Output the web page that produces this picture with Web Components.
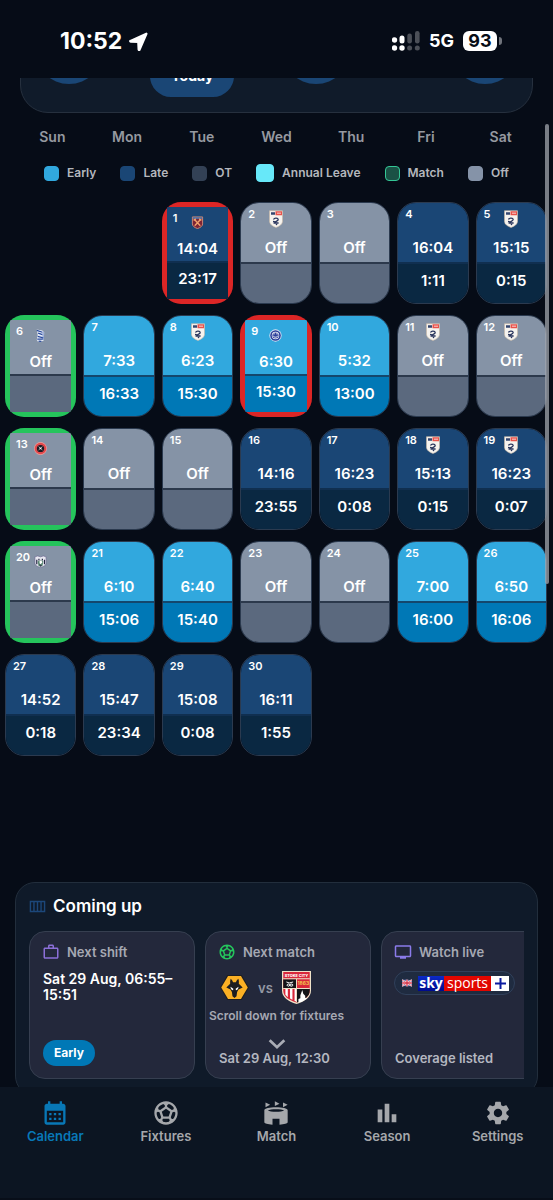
<!DOCTYPE html>
<html lang="en">
<head>
<meta charset="utf-8">
<meta name="viewport" content="width=device-width, initial-scale=1">
<title>Shift calendar</title>
<style>
  html, body { margin: 0; background: #060c17; }
  body { font-family: Inter, "Noto Sans", sans-serif; color: #fff; }
</style>
</head>
<body>
<shift-app></shift-app>

<script>
const define = (name, html, setup) => {
  const template = document.createElement('template');
  template.innerHTML = html;
  customElements.define(name, class extends HTMLElement {
    connectedCallback() {
      if (this.shadowRoot) return;
      const root = this.attachShadow({ mode: 'open' });
      const content = template.content.cloneNode(true);
      if (setup) setup(this, content);
      root.append(content);
    }
  });
};

/* ---------- icons ---------- */
const ball = '<path d="M12 2C6.48 2 2 6.48 2 12s4.48 10 10 10 10-4.48 10-10S17.52 2 12 2zm1 3.3l1.35-.95c1.82.56 3.37 1.76 4.38 3.34l-.39 1.34-1.35.46L13 6.7V5.3zm-3.35-.95L11 5.3v1.4L7.01 9.49l-1.35-.46-.39-1.34c1.01-1.57 2.56-2.77 4.38-3.34zM7.08 17.11l-1.14.1C4.73 15.81 4 13.99 4 12c0-.12.01-.23.02-.35l1-.73 1.38.48 1.46 4.34-.78 1.37zm7.42 2.48c-.79.26-1.63.41-2.5.41s-1.71-.15-2.5-.41l-.69-1.49.64-1.1h5.11l.64 1.11-.7 1.48zM14.27 15H9.73l-1.35-4.02L12 8.44l3.63 2.54L14.27 15zm3.79 2.21l-1.14-.1-.79-1.37 1.46-4.34 1.39-.47 1 .73c.01.11.02.22.02.34 0 1.99-.73 3.81-1.94 5.21z"/>';
const icons = {
  calendar: ['0 0 24 24', '<path d="M19 4h-1V2h-2v2H8V2H6v2H5c-1.11 0-1.99.9-1.99 2L3 20c0 1.1.89 2 2 2h14c1.1 0 2-.9 2-2V6c0-1.1-.9-2-2-2zm0 16H5V10h14v10zM9 14H7v-2h2v2zm4 0h-2v-2h2v2zm4 0h-2v-2h2v2zm-8 4H7v-2h2v2zm4 0h-2v-2h2v2zm4 0h-2v-2h2v2z"/>'],
  ball: ['0 0 24 24', ball],
  stadium: ['0 0 24 24', '<path d="M3 3l4 2-4 2zM11 2l4 2-4 2zM18 3l4 2-4 2z"/><path fill-rule="evenodd" d="M2 9.6C2 8 6.500 7 12 7s10 1 10 2.600V20c0 1-3 1.800-7 2v-5H9v5c-4-.2-7-1-7-2zM5 9.900c1.200.7 3.800 1.100 7 1.100s5.800-.4 7-1.100c-1.200-.7-3.800-1.100-7-1.100s-5.800.4-7 1.100z"/>'],
  chart: ['0 0 24 24', '<path d="M4 9h4v11H4zM16 13h4v7h-4zM10 4h4v16h-4z"/>'],
  settings: ['0 0 24 24', '<path d="M19.140 12.940c.04-.3.060-.61.060-.94s-.02-.64-.07-.94l2.030-1.580c.18-.14.230-.41.120-.61l-1.920-3.320c-.12-.22-.37-.29-.59-.22l-2.390.960c-.5-.38-1.030-.7-1.620-.94l-.36-2.540c-.04-.24-.24-.41-.48-.41h-3.840c-.24 0-.43.170-.47.410l-.36 2.540c-.59.240-1.130.570-1.620.940l-2.390-.96c-.22-.08-.47 0-.59.220L2.740 8.870c-.12.210-.08.470.12.610l2.030 1.580c-.05.300-.09.630-.09.940s.02.640.07.940l-2.030 1.580c-.18.140-.23.410-.12.610l1.920 3.320c.12.220.37.290.59.220l2.390-.96c.5.380 1.030.700 1.620.940l.36 2.540c.05.240.24.410.48.410h3.840c.24 0 .44-.17.470-.41l.36-2.540c.59-.24 1.130-.56 1.620-.94l2.390.960c.22.080.47 0 .59-.22l1.920-3.320c.12-.22.070-.47-.12-.61l-2.010-1.580zM12 15.600c-1.980 0-3.600-1.620-3.600-3.600s1.620-3.600 3.600-3.600 3.600 1.620 3.600 3.600-1.620 3.600-3.600 3.600z"/>'],
  bag: ['0 0 24 24', '<path d="M14 6V4h-4v2h4zM4 8v11h16V8H4zm16-2c1.110 0 2 .89 2 2v11c0 1.110-.89 2-2 2H4c-1.110 0-2-.89-2-2V8c0-1.110.89-2 2-2h4V4c0-1.110.89-2 2-2h4c1.110 0 2 .89 2 2v2h4z"/>'],
  tv: ['0 0 24 24', '<path d="M21 3H3c-1.100 0-2 .9-2 2v12c0 1.100.9 2 2 2h5v2h8v-2h5c1.100 0 2-.9 2-2V5c0-1.100-.9-2-2-2zm0 14H3V5h18v12z"/>'],
  week: ['0 0 24 24', '<path fill="none" stroke="currentColor" stroke-width="2" d="M2 5h20v14H2zM7 5v14M12 5v14M17 5v14"/>'],
  chevron: ['0 0 24 24', '<path fill="none" stroke="currentColor" stroke-width="3" d="M4 8l8 7.500L20 8"/>'],
  arrow: ['0 0 20 20', '<path stroke="currentColor" stroke-width="2.400" stroke-linejoin="round" d="M18.300 1.800L1.600 9.400c-.5.2-.4.700.2.800l8 .3.400 8c0 .6.600.7.800.2z"/>'],
  signal: ['0 0 28 20', '<g><circle cx="2.500" cy="9" r="2.700"/><circle cx="2.500" cy="17" r="2.700"/><rect x="7.500" y="4.500" width="5" height="8" rx="2.500"/><circle cx="10" cy="17" r="2.700"/></g><g opacity=".28"><rect x="15.300" y="2.500" width="4.600" height="10" rx="2.300"/><circle cx="17.600" cy="17" r="2.500"/><rect x="23" y="0" width="4.600" height="12.500" rx="2.300"/><circle cx="25.300" cy="17" r="2.500"/></g>'],
  efl: ['0 0 14 18', '<path fill="#f6f3ee" stroke="#cbb9a4" stroke-width=".6" d="M.5.7h13v10.500c0 3-3 5-6.500 6.300C3.500 16.200.5 14.200.5 11.200z"/><path fill="#34466f" d="M2 2.200h4v2.500H2z"/><path fill="#e8524a" d="M6.500 1.200H13v4H6.500z"/><path fill="#fff" d="M8 2.700h4v.9H8z"/><path fill="none" stroke="#28345c" stroke-width="1.300" d="M4.500 9.500c1-2.200 4.500-1.500 4.700 0 .1 1.500-2.900 1.500-3.800 3.500h4.200M4 11.500l2 .5"/><circle cx="7.500" cy="14.500" r=".8" fill="#28345c"/>'],
  westham: ['0 0 14 14', '<path fill="#7d2435" stroke="#d48a77" stroke-width="1" d="M1.500 1h11v7.500c0 2.500-2.500 4-5.500 5-3-1-5.500-2.500-5.500-5z"/><path fill="#4d82bd" d="M2 1.300h10v1.700H2z"/><path stroke="#f1a26b" stroke-width="1.400" d="M4 4l6 6.500M10 4l-6 6.500"/><path stroke="#f1a26b" stroke-width="1.600" d="M2.800 4.800l2.400-1.600M11.200 4.800L8.800 3.200"/>'],
  birmingham: ['0 0 14 14', '<path fill="#e8edf8" d="M3 .5l6 1 2 2-.5 9L8 13.500H4l-1-2 1-5z"/><path fill="none" stroke="#294a9c" stroke-width="1.300" d="M3 1.500l6 2M4.500 4.500L9 6M4 8l6 1.500M3.500 11h6M5 13l3 .3"/><path stroke="#6380bd" stroke-width="1" d="M9.800 3v9"/>'],
  portsmouth: ['0 0 14 14', '<circle cx="7" cy="7" r="6.600" fill="#dce3f4"/><circle cx="7" cy="7" r="5.700" fill="#2a3f9a"/><circle cx="7" cy="7" r="4" fill="#fff"/><circle cx="7" cy="7" r="3.300" fill="#2e419b"/><path fill="none" stroke="#fff" stroke-width="1" d="M4.500 5.200h1.700M7.800 5.200h1.700M4.500 7.500a3 3 0 0 0 5 0"/>'],
  sheffield: ['0 0 14 14', '<circle cx="7" cy="7" r="6.900" fill="#f39a96"/><circle cx="7" cy="7" r="6.200" fill="#e0484c"/><circle cx="7" cy="7" r="3.900" fill="#191a22"/><path fill="none" stroke="#eee" stroke-width=".8" d="M5 5l4 3.500M9 5L5 8.500"/><circle cx="7" cy="7" r=".9" fill="#fff"/>'],
  westbrom: ['0 0 14 14', '<path fill="#e8e8f1" stroke="#6b668f" stroke-width=".7" d="M1 2l3-1 3 1 3-1 3 1v7c0 2-2.500 3.500-6 4.500C3.500 12.500 1 11 1 9z"/><path stroke="#242642" stroke-width="1.300" d="M3 5v5M5.300 4v2M9 4v2M11.300 5v5"/><path fill="#56866f" d="M4 7l3-2 3 2-1 5H5z"/><path fill="#fff" d="M6 6h2l1 2-2 2-1-1z"/><path fill="#36394f" d="M5.500 10l3 1-1.500 2z"/>'],
  wolves: ['0 0 30 26', '<path fill="#1e1e20" d="M7.500 0h15L30 13l-7.500 13h-15L0 13z"/><path fill="#fbb024" d="M8.300 1h13.400L28.800 13l-7.100 12H8.300L1.200 13z"/><path fill="#1d1d20" d="M11 4c1.200.8 2 2.100 2.500 3.500h3C17 6.100 17.800 4.800 19 4c.6 1.900.7 3.600.5 5.200l4 3.800-4.300 2-1.500 2.600-.6 4.400L15 24l-2.100-2-.6-4.400-1.500-2.600-4.300-2 4-3.800C10.300 7.600 10.400 5.900 11 4z"/><path fill="#fff" d="M10.800 12.200l3 2.100-.3 1.500c-1.500-.2-2.500-1.300-2.700-3.600zM19.200 12.200l-3 2.100.3 1.500c1.500-.2 2.500-1.300 2.700-3.600z"/>'],
  stoke: ['0 0 30 34', '<path fill="#efe2c9" d="M0 0h30v20c0 7-6 11-15 14C6 31 0 27 0 20z"/><path fill="#d9273a" d="M1.300 1h27.400v19c0 6-5 9.500-13.700 12.600C6.300 29.500 1.300 26 1.300 20z"/><path fill="#141418" d="M1.300 8.500h13.200v9H1.300zM15.500 18.500h13.200V20c0 6-5 9.500-13.200 12.400z"/><path fill="#efe2c9" d="M1.300 7.500h27.400v1H1.300zM1.300 17.500h27.400v1H1.300zM14.500 8h1v24h-1z"/><path fill="#fff" d="M3.500 18.500h2.500v8.500l-2.500-2.500zM8.300 18.500h2.500v11.300l-2.500-1.300zM13 18.500h1.500v13L13 31zM21 19.500l1 4 2 2v2l2 1-6 3.500h-3v-3l2-1v-3z"/><path fill="none" stroke="#fff" stroke-width="1" d="M4.500 11.300l3 1 4-1M5 14.500c1-1.800 3-1.300 3 .3 0-1.600 2.500-2.100 3.500-.3-1 1.800-3.500 1.300-3.500-.3 0 1.600-2 2.100-3 .3"/><text x="15" y="6" text-anchor="middle" font-family="Inter" font-size="4" font-weight="800" fill="#fff">STOKE CITY</text><text x="22" y="14.800" text-anchor="middle" font-family="Inter" font-size="5" font-weight="700" fill="#f3c94d">1863</text>'],
  flag: ['0 0 10 8', '<path fill="#3c4f92" d="M0 1l3-.5 4 .5 3-.3v6.300l-3 .3-4-.3-3 .5z"/><path stroke="#fff" stroke-width="1.800" d="M0 1l10 6M10 1L0 7"/><path stroke="#fff" stroke-width="2.600" d="M5 .8v6.400M0 4h10"/><path stroke="#d63c50" stroke-width="1.400" d="M5 .8v6.400M0 4h10"/><path stroke="#d63c50" stroke-width=".7" d="M0 1l10 6M10 1L0 7"/>']
};
define('ui-icon', `<style>
  :host { display: inline-flex; flex: none; }
  svg { display: block; width: 100%; height: 100%; fill: currentColor; }
</style><svg aria-hidden="true"></svg>`, (el, root) => {
  const svg = root.querySelector('svg');
  const [box, art] = icons[el.getAttribute('name')];
  svg.setAttribute('viewBox', box);
  svg.innerHTML = art;
});

/* ---------- status bar ---------- */
define('status-bar', `<style>
  :host { display: flex; justify-content: space-between; align-items: center; height: 78px; box-sizing: border-box; padding: 4px 51px 0 60px; }
  .side { display: flex; align-items: center; }
  time { font-size: 23px; font-weight: 700; line-height: 28px; }
  .arrow { width: 19px; height: 19px; margin-left: 7px; }
  .signal { width: 28px; height: 20px; margin-right: 9px; }
  .net { font-size: 18px; font-weight: 700; line-height: 24px; margin-right: 9px; }
  .battery { background: #fff; color: #060c17; border-radius: 6px; width: 34px; font-size: 18px; font-weight: 700; line-height: 20px; text-align: center; }
  .tip { width: 3px; height: 8px; margin-left: 2px; border-radius: 0 4px 4px 0; background: #70747c; }
</style>
<div class="side"><time>10:52</time><ui-icon class="arrow" name="arrow"></ui-icon></div>
<div class="side"><ui-icon class="signal" name="signal"></ui-icon><span class="net">5G</span><span class="battery">93</span><span class="tip"></span></div>`);

/* ---------- month controls, mostly scrolled under the status bar ---------- */
define('month-controls', `<style>
  :host { display: flex; align-items: flex-end; margin: -65px 20px 0; height: 100px; box-sizing: border-box; padding: 0 13px 28px 14px; justify-content: space-between; background: #101b2a; border: 1px solid #26303e; border-radius: 28px; }
  button { border: 0; padding: 0; margin: 0; width: 68px; height: 68px; border-radius: 34px; background: #1a4675; color: #fff; font: 700 14px/20px Inter, sans-serif; }
  .today { width: 84px; height: 42px; border-radius: 21px; margin: 0 6px -13px 6px; }
  .last { margin-left: 60px; }
</style>
<button></button><button class="today">Today</button><button></button><button class="last"></button>`);

define('week-days', `<style>
  :host { display: grid; grid-template-columns: repeat(7, 1fr); margin: 14px 15px 0; font-size: 14px; font-weight: 600; line-height: 20px; color: #9599a0; text-align: center; }
</style>` + ['Sun', 'Mon', 'Tue', 'Wed', 'Thu', 'Fri', 'Sat'].map(d => `<span>${d}</span>`).join(''));

define('legend-item', `<style>
  :host { display: flex; align-items: center; gap: 8px; font-size: 12px; font-weight: 600; line-height: 20px; color: #b4b7bd; }
  i { width: 15px; height: 15px; box-sizing: border-box; border-radius: 4px; background: var(--swatch); border: 1px solid var(--edge, var(--swatch)); }
  :host([wide]) i { width: 18px; height: 18px; }
</style><i></i><span><slot></slot></span>`);

define('shift-legend', `<style>
  :host { display: flex; justify-content: center; gap: 24px; margin-top: 16px; }
</style>
<legend-item style="--swatch:#31a8de">Early</legend-item>
<legend-item style="--swatch:#1a4675">Late</legend-item>
<legend-item style="--swatch:#334155">OT</legend-item>
<legend-item wide style="--swatch:#67e8f9">Annual Leave</legend-item>
<legend-item style="--swatch:#1a5145;--edge:#34c796">Match</legend-item>
<legend-item style="--swatch:#8593a8">Off</legend-item>`);

/* ---------- one calendar day ---------- */
define('shift-day', `<style>
  :host { display: block; min-width: 0; }
  button { display: block; width: 100%; height: 100%; box-sizing: border-box; margin: 0; padding: 0; border: 1px solid #2b3a4f; border-radius: 19px; overflow: hidden; color: #fff; font: 600 15px/20px Inter, sans-serif; background: var(--ring, transparent); }
  .body { position: relative; display: grid; grid-template-rows: 1fr 41px; height: 100%; }
  .top, .end { display: flex; justify-content: center; align-items: flex-end; box-sizing: border-box; min-height: 0; }
  .top { background: var(--top); padding-bottom: 4px; }
  .end { background: var(--low); border-top: 2px solid var(--line); align-items: center; padding-bottom: 5px; }
  .date { position: absolute; left: 7px; top: 3px; font-size: 11px; line-height: 16px; }
  .crest { position: absolute; left: 0; right: 0; top: 7px; display: flex; justify-content: center; }
  ui-icon { width: 14px; height: 18px; }
  :host([kind="early"]) { --top: #31a8de; --low: #0078b6; --line: #14476c; }
  :host([kind="late"]) { --top: #1a4675; --low: #0a2842; --line: #102f50; }
  :host([kind="off"]) { --top: #8593a6; --low: #5b697e; --line: #2c394c; }
  :host([ring]) button { border: 0; padding: 5px; }
  :host([ring="home"]) { --ring: #25c45c; }
  :host([ring="away"]) { --ring: #dc2626; }
  :host([ring]) .body { grid-template-rows: 1fr 38px; }
  :host([ring]) .date { left: 6px; top: 3px; }
  :host([ring]) .crest { top: 9px; }
  :host([ring]) ui-icon { width: 13px; height: 13px; }
  :host([ring]) .top { padding-bottom: 2px; }
</style>
<button><div class="body"><span class="date"></span><span class="crest"></span><span class="top"></span><span class="end"></span></div></button>`, (el, root) => {
  root.querySelector('.date').textContent = el.getAttribute('date');
  root.querySelector('.top').textContent = el.getAttribute('from') || 'Off';
  root.querySelector('.end').textContent = el.getAttribute('to') || '';
  const crest = el.getAttribute('crest');
  if (crest) root.querySelector('.crest').innerHTML = `<ui-icon name="${crest}"></ui-icon>`;
});

define('shift-calendar', `<style>
  :host { display: grid; grid-template-columns: repeat(7, 1fr); grid-template-rows: repeat(6, 102px); gap: 11px 7px; margin: 19px 6px 0 5px; }
  shift-day:first-of-type { grid-column-start: 3; }
</style>`, (el, root) => {
  const days = [
    ['late', '14:04', '23:17', 'westham', 'away'], ['off', '', '', 'efl'], ['off'], ['late', '16:04', '1:11'], ['late', '15:15', '0:15', 'efl'],
    ['off', '', '', 'birmingham', 'home'], ['early', '7:33', '16:33'], ['early', '6:23', '15:30', 'efl'], ['early', '6:30', '15:30', 'portsmouth', 'away'], ['early', '5:32', '13:00'], ['off', '', '', 'efl'], ['off', '', '', 'efl'],
    ['off', '', '', 'sheffield', 'home'], ['off'], ['off'], ['late', '14:16', '23:55'], ['late', '16:23', '0:08'], ['late', '15:13', '0:15', 'efl'], ['late', '16:23', '0:07', 'efl'],
    ['off', '', '', 'westbrom', 'home'], ['early', '6:10', '15:06'], ['early', '6:40', '15:40'], ['off'], ['off'], ['early', '7:00', '16:00'], ['early', '6:50', '16:06'],
    ['late', '14:52', '0:18'], ['late', '15:47', '23:34'], ['late', '15:08', '0:08'], ['late', '16:11', '1:55']
  ];
  days.forEach(([kind, from, to, crest, ring], i) => {
    const day = document.createElement('shift-day');
    Object.entries({ date: i + 1, kind, from, to, crest, ring }).forEach(([k, v]) => v && day.setAttribute(k, v));
    root.append(day);
  });
});

/* ---------- coming up ---------- */
define('info-card', `<style>
  :host { display: flex; flex-direction: column; flex: none; width: 166px; height: 148px; box-sizing: border-box; padding: 11px 13px 12px; border: 1px solid #363f50; border-radius: 16px; background: #23283b; }
  header { display: flex; align-items: center; gap: 7px; font-size: 13px; font-weight: 600; line-height: 18px; color: #a6a9b3; }
  ui-icon { width: 18px; height: 18px; margin-left: -1px; color: var(--tint); }
</style><header><ui-icon></ui-icon><slot name="title"></slot></header><slot></slot>`, (el, root) => {
  root.querySelector('ui-icon').setAttribute('name', el.getAttribute('icon'));
});
/* ---------- broadcaster badge ---------- */
define('channel-badge', `<style>
  :host { display: flex; align-items: center; align-self: flex-start; box-sizing: border-box; width: 121px; height: 24px; margin: 10px 0 0 -1px; padding: 0 5px 0 7px; border: 1px solid #30405a; border-radius: 12px; background: #1f2b40; font-family: "Open Sans", sans-serif; }
  ui-icon { width: 10px; height: 8px; margin-right: 6px; }
  span { display: block; height: 15px; line-height: 13px; text-align: center; }
  .sky { width: 26px; background: linear-gradient(#0b2ac8, #000b8e); font-size: 14px; font-weight: 700; }
  .sports { width: 47px; background: #e10600; font-size: 14px; font-weight: 400; }
  .plus { display: grid; place-items: center; width: 18px; background: #fff; }
  svg { width: 11px; height: 11px; }
</style><ui-icon name="flag"></ui-icon><span class="sky">sky</span><span class="sports">sports</span><span class="plus"><svg viewBox="0 0 11 11" aria-hidden="true"><path stroke="#0b1ba0" stroke-width="2" d="M5.500 0v11M0 5.500h11"/></svg></span>`);

define('coming-up', `<style>
  :host { display: block; box-sizing: border-box; margin: 13px 15px 0; padding: 12px 13px 16px; border: 1px solid #222e3c; border-radius: 20px; background: #0f1a29; }
  h2 { display: flex; align-items: center; gap: 7px; margin: 0; font-size: 17px; font-weight: 600; line-height: 22px; }
  .week { width: 17px; height: 17px; color: #1c477a; }
  .row { display: flex; gap: 10px; overflow: hidden; margin-top: 14px; }
  p { margin: 0; }
  .when { margin: 10px -8px 0 0; font-size: 14px; font-weight: 600; line-height: 16px; }
  .pill { align-self: flex-start; margin-top: auto; padding: 0 11px; border-radius: 13px; background: #0078b6; font-size: 12px; font-weight: 700; line-height: 26px; }
  .teams { display: flex; align-items: center; gap: 9px; margin-top: 10px; padding-left: 1px; font-size: 13px; font-weight: 600; line-height: 16px; color: #9498a4; }
  .wolves { width: 29px; height: 25px; }
  .stoke { width: 29px; height: 33px; }
  .foot { margin-top: auto; font-size: 13px; font-weight: 600; line-height: 16px; color: #b4b7c0; }
</style>
<h2><ui-icon class="week" name="week"></ui-icon>Coming up</h2>
<div class="row">
  <info-card icon="bag" style="--tint:#8b6fd8"><span slot="title">Next shift</span><p class="when">Sat 29 Aug, 06:55–15:51</p><span class="pill">Early</span></info-card>
  <info-card icon="ball" style="--tint:#25c45c"><span slot="title">Next match</span><div class="teams"><ui-icon class="wolves" name="wolves"></ui-icon><span>vs</span><ui-icon class="stoke" name="stoke"></ui-icon></div><p class="foot">Sat 29 Aug, 12:30</p></info-card>
  <info-card icon="tv" style="--tint:#8b7bea"><span slot="title">Watch live</span><channel-badge></channel-badge><p class="foot">Coverage listed</p></info-card>
</div>`);

/* ---------- bottom navigation ---------- */
define('nav-item', `<style>
  :host { display: block; flex: 1; }
  a { display: flex; flex-direction: column; align-items: center; color: #a5a7ab; text-decoration: none; font-size: 13px; font-weight: 600; line-height: 18px; }
  :host([active]) a { color: #0878b7; }
  ui-icon { width: 28px; height: 28px; }
</style><a href="#"><ui-icon></ui-icon><slot></slot></a>`, (el, root) => {
  root.querySelector('ui-icon').setAttribute('name', el.getAttribute('icon'));
});
define('bottom-nav', `<style>
  :host { display: flex; flex: none; box-sizing: border-box; height: 113px; padding-top: 12px; background: #0c1522; border-bottom: 2px solid #080e19; }
</style>
<nav-item icon="calendar" active>Calendar</nav-item><nav-item icon="ball">Fixtures</nav-item><nav-item icon="stadium">Match</nav-item><nav-item icon="chart">Season</nav-item><nav-item icon="settings">Settings</nav-item>`);

define('shift-app', `<style>
  :host { display: flex; flex-direction: column; height: 100vh; }
  status-bar { flex: none; }
  main { position: relative; flex: 1; min-height: 0; overflow: hidden; }
  .thumb { position: absolute; right: 4px; top: 46px; width: 4px; height: 460px; border-radius: 2px; background: rgba(160, 164, 172, .75); }
  .hint { position: absolute; left: 0; right: 0; bottom: 32px; display: flex; flex-direction: column; align-items: center; gap: 8px; font-size: 12px; font-weight: 600; line-height: 18px; color: #a6a9b3; }
  .hint ui-icon { width: 22px; height: 22px; color: #a9acb5; }
</style>
<status-bar></status-bar>
<main>
  <month-controls></month-controls>
  <week-days></week-days>
  <shift-legend></shift-legend>
  <shift-calendar></shift-calendar>
  <coming-up></coming-up>
  <div class="thumb"></div>
  <div class="hint"><span>Scroll down for fixtures</span><ui-icon name="chevron"></ui-icon></div>
</main>
<bottom-nav></bottom-nav>`);
</script>
</body>
</html>
